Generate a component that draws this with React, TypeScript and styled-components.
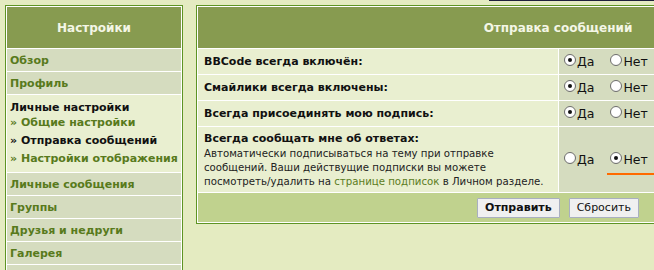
import React, { FC } from 'react'
import styled, { createGlobalStyle, css } from 'styled-components'

const GlobalStyle = createGlobalStyle`
	html, body {
		margin: 0;
		padding: 0;
		background: #e4ebc1;
		overflow: hidden;
	}
	body {
		font-family: 'DejaVu Sans', Verdana, sans-serif;
		color: #111;
	}
`

const TopStrip = styled.div`
	height: 1px;
	margin-left: 489px;
	background: #1f1f3c;
`

const Page = styled.div`
	display: flex;
	align-items: flex-start;
	gap: 13px;
	padding: 4px 0 0 5px;
	width: 1000px;
`

const Panel = styled.div`
	border: 1px solid #5e9424;
	padding: 1px;
	background: #fff;
	flex-shrink: 0;
`

const Sidebar = styled(Panel)`
	width: 174px;
	display: flex;
	flex-direction: column;
	gap: 1px;
`

const PanelHead = styled.div`
	height: 41px;
	display: flex;
	align-items: center;
	justify-content: center;
	background: #879b50;
	color: #f4f6e6;
	font-weight: bold;
	font-size: 12px;
`

const NavItem = styled.div`
	height: 22px;
	display: flex;
	align-items: center;
	padding-left: 3px;
	background: #d5dcbf;
	color: #587a1c;
	font-weight: bold;
	font-size: 11px;
`

const NavGroup = styled.div`
	background: #e9efd0;
	padding: 6px 3px 4px;
	font-weight: bold;
	font-size: 11px;
`

const NavGroupTitle = styled.div`
	line-height: 14px;
	margin-bottom: -1px;
	color: #111;
`

const SubItem = styled.div<{ $active?: boolean }>`
	line-height: 18px;
	color: ${({ $active }) => ($active ? '#111' : '#587a1c')};
`

const Main = styled(Panel)`
	width: 720px;
`

const Table = styled.div`
	display: grid;
	grid-template-columns: 360px 359px;
	gap: 1px;
	background: #fff;
`

const TableHead = styled(PanelHead)`
	grid-column: 1 / -1;
`

const LabelCell = styled.div<{ $tall?: boolean }>`
	background: #e9efd0;
	padding: 0 6px;
	display: flex;
	flex-direction: column;
	justify-content: center;
	${({ $tall }) =>
		$tall
			? css`
					justify-content: flex-start;
					padding-top: 4px;
					padding-bottom: 3px;
				`
			: css`
					height: 25px;
				`}
`

const LabelTitle = styled.div`
	font-weight: bold;
	font-size: 11px;
	line-height: 16px;
`

const Description = styled.div`
	font-size: 10.2px;
	line-height: 14px;
	color: #222;
`

const Link = styled.a`
	color: #5b7c22;
	text-decoration: none;
`

const OptionCell = styled.div`
	background: #d5dcbf;
	display: flex;
	align-items: center;
	padding-left: 5px;
	gap: 16px;
`

const Option = styled.label<{ $marked?: boolean }>`
	position: relative;
	display: flex;
	align-items: center;
	font-size: 12.5px;
	color: #111;
	${({ $marked }) =>
		$marked &&
		css`
			&::after {
				content: '';
				position: absolute;
				left: -3px;
				top: 21px;
				width: 70px;
				height: 2px;
				background: #ff6a00;
			}
		`}
`

const RadioDot = styled.span<{ $checked?: boolean }>`
	width: 10px;
	height: 10px;
	border-radius: 50%;
	border: 1px solid #6e6e6e;
	background: radial-gradient(circle at 40% 40%, #ffffff 55%, #e0e0e0 100%);
	margin-right: 1px;
	margin-top: -3px;
	display: flex;
	align-items: center;
	justify-content: center;
	&::before {
		content: '';
		width: 4px;
		height: 4px;
		border-radius: 50%;
		background: ${({ $checked }) => ($checked ? '#111' : 'transparent')};
	}
`

const Footer = styled.div`
	grid-column: 1 / -1;
	height: 29px;
	background: #c0d28e;
	display: flex;
	align-items: center;
	justify-content: center;
	gap: 9px;
`

const Button = styled.button<{ $primary?: boolean }>`
	height: 20px;
	padding: 0 7px;
	font-family: 'DejaVu Sans', Verdana, sans-serif;
	font-size: 11px;
	font-weight: ${({ $primary }) => ($primary ? 'bold' : 'normal')};
	color: #111;
	background: #f0f0f0;
	border: 1px solid #a9afc0;
	border-radius: 1px;
`

const Radio: FC<{ label: string; checked?: boolean; marked?: boolean }> = ({ label, checked, marked }) => (
	<Option $marked={marked}>
		<RadioDot $checked={checked} />
		{label}
	</Option>
)

const YesNo: FC<{ yes: boolean; marked?: boolean }> = ({ yes, marked }) => (
	<OptionCell>
		<Radio label="Да" checked={yes} />
		<Radio label="Нет" checked={!yes} marked={marked} />
	</OptionCell>
)

const App = () => (
	<>
		<GlobalStyle />
		<TopStrip />
		<Page>
			<Sidebar>
				<PanelHead>Настройки</PanelHead>
				<NavItem>Обзор</NavItem>
				<NavItem>Профиль</NavItem>
				<NavGroup>
					<NavGroupTitle>Личные настройки</NavGroupTitle>
					<SubItem>» Общие настройки</SubItem>
					<SubItem $active>» Отправка сообщений</SubItem>
					<SubItem>» Настройки отображения</SubItem>
				</NavGroup>
				<NavItem>Личные сообщения</NavItem>
				<NavItem>Группы</NavItem>
				<NavItem>Друзья и недруги</NavItem>
				<NavItem>Галерея</NavItem>
				<NavItem>Закладки</NavItem>
			</Sidebar>
			<Main>
				<Table>
					<TableHead>Отправка сообщений</TableHead>
					<LabelCell>
						<LabelTitle>BBCode всегда включён:</LabelTitle>
					</LabelCell>
					<YesNo yes />
					<LabelCell>
						<LabelTitle>Смайлики всегда включены:</LabelTitle>
					</LabelCell>
					<YesNo yes />
					<LabelCell>
						<LabelTitle>Всегда присоединять мою подпись:</LabelTitle>
					</LabelCell>
					<YesNo yes />
					<LabelCell $tall>
						<LabelTitle>Всегда сообщать мне об ответах:</LabelTitle>
						<Description>
							Автоматически подписываться на тему при отправке сообщений. Ваши действущие подписки вы можете
							посмотреть/удалить на <Link href="#">странице подписок</Link> в Личном разделе.
						</Description>
					</LabelCell>
					<YesNo yes={false} marked />
					<Footer>
						<Button $primary>Отправить</Button>
						<Button>Сбросить</Button>
					</Footer>
				</Table>
			</Main>
		</Page>
	</>
)

export default App
